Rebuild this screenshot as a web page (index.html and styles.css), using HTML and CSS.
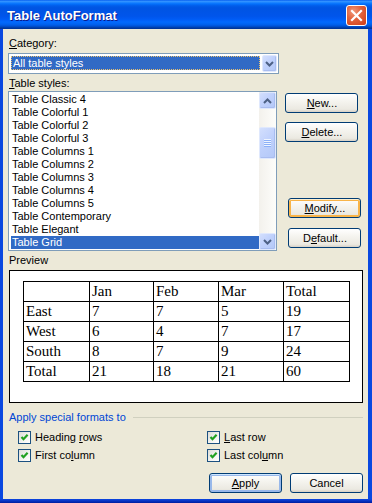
FILE: index.html
```
<!DOCTYPE html>
<html>
<head>
<meta charset="utf-8">
<title>Table AutoFormat</title>
<link rel="stylesheet" href="styles.css">
</head>
<body>
<div class="window">
  <div class="titlebar">
    <span class="title">Table AutoFormat</span>
    <span class="close">
      <svg width="19" height="19" viewBox="0 0 19 19"><path d="M5 5 L14 14 M14 5 L5 14" stroke="#fff" stroke-width="2.2" stroke-linecap="square" fill="none"/></svg>
    </span>
  </div>
  <div class="client">
    <div class="lbl lbl-cat"><u>C</u>ategory:</div>
    <div class="combo">
      <div class="combo-val"><span>All table styles</span></div>
      <div class="xpbtn combo-btn">
        <svg width="9" height="6" viewBox="0 0 9 6"><path d="M1 1 L4.5 4.5 L8 1" stroke="#4d6185" stroke-width="2" fill="none"/></svg>
      </div>
    </div>
    <div class="lbl lbl-styles"><u>T</u>able styles:</div>
    <div class="styles-row">
      <div class="listbox">
        <ul class="items">
          <li>Table Classic 4</li>
          <li>Table Colorful 1</li>
          <li>Table Colorful 2</li>
          <li>Table Colorful 3</li>
          <li>Table Columns 1</li>
          <li>Table Columns 2</li>
          <li>Table Columns 3</li>
          <li>Table Columns 4</li>
          <li>Table Columns 5</li>
          <li>Table Contemporary</li>
          <li>Table Elegant</li>
          <li class="sel">Table Grid</li>
        </ul>
        <div class="vscroll">
          <div class="xpbtn sb-btn">
            <svg width="9" height="6" viewBox="0 0 9 6"><path d="M1 5 L4.5 1.5 L8 5" stroke="#4d6185" stroke-width="2" fill="none"/></svg>
          </div>
          <div class="track">
            <div class="xpbtn thumb"><span class="grip"></span></div>
          </div>
          <div class="xpbtn sb-btn">
            <svg width="9" height="6" viewBox="0 0 9 6"><path d="M1 1 L4.5 4.5 L8 1" stroke="#4d6185" stroke-width="2" fill="none"/></svg>
          </div>
        </div>
      </div>
      <div class="side">
        <div class="btn btn-new"><u>N</u>ew...</div>
        <div class="btn btn-delete"><u>D</u>elete...</div>
        <div class="btn btn-modify btn-hot"><u>M</u>odify...</div>
        <div class="btn btn-default">D<u>e</u>fault...</div>
      </div>
    </div>
    <div class="lbl lbl-preview">Preview</div>
    <div class="preview">
      <table class="ptable">
        <colgroup><col class="c1"><col class="c2"><col class="c3"><col class="c4"><col class="c5"></colgroup>
        <tr><td></td><td>Jan</td><td>Feb</td><td>Mar</td><td>Total</td></tr>
        <tr><td>East</td><td>7</td><td>7</td><td>5</td><td>19</td></tr>
        <tr><td>West</td><td>6</td><td>4</td><td>7</td><td>17</td></tr>
        <tr><td>South</td><td>8</td><td>7</td><td>9</td><td>24</td></tr>
        <tr><td>Total</td><td>21</td><td>18</td><td>21</td><td>60</td></tr>
      </table>
    </div>
    <div class="group-title"><span>Apply special formats to</span><i class="rule"></i></div>
    <div class="checks">
      <div class="chk"><span class="box"><svg width="11" height="11" viewBox="0 0 11 11"><path d="M2.5 5 L4.5 7.2 L8.6 2.8" stroke="#21a121" stroke-width="2.2" fill="none"/></svg></span><span>Heading <u>r</u>ows</span></div>
      <div class="chk"><span class="box"><svg width="11" height="11" viewBox="0 0 11 11"><path d="M2.5 5 L4.5 7.2 L8.6 2.8" stroke="#21a121" stroke-width="2.2" fill="none"/></svg></span><span><u>L</u>ast row</span></div>
      <div class="chk"><span class="box"><svg width="11" height="11" viewBox="0 0 11 11"><path d="M2.5 5 L4.5 7.2 L8.6 2.8" stroke="#21a121" stroke-width="2.2" fill="none"/></svg></span><span>First co<u>l</u>umn</span></div>
      <div class="chk"><span class="box"><svg width="11" height="11" viewBox="0 0 11 11"><path d="M2.5 5 L4.5 7.2 L8.6 2.8" stroke="#21a121" stroke-width="2.2" fill="none"/></svg></span><span>Last col<u>u</u>mn</span></div>
    </div>
    <div class="footer">
      <div class="btn btn-default-action"><u>A</u>pply</div>
      <div class="btn">Cancel</div>
    </div>
  </div>
</div>
</body>
</html>
```
FILE: styles.css
```
* { box-sizing: border-box; }
html, body { margin: 0; padding: 0; }
body {
  width: 372px;
  height: 503px;
  overflow: hidden;
  background: #fff;
  font-family: "Liberation Sans", Arial, sans-serif;
  font-size: 11px;
  color: #000;
}
u { text-decoration: underline; text-underline-offset: 1px; }

.window {
  width: 372px;
  height: 503px;
  display: flex;
  flex-direction: column;
  background: linear-gradient(to bottom, #0a48e0 0, #0a48e0 499px, #0b3dd3 500px, #001c9e 503px);
}

.titlebar {
  height: 29px;
  flex: none;
  display: flex;
  align-items: flex-start;
  padding: 0 5px 0 7px;
  background: linear-gradient(to bottom,
    #0058ee 0%, #3593ff 4%, #288eff 7%, #127dff 10%, #036ffc 14%,
    #0262ee 18%, #0057e5 24%, #0054e3 30%, #0055eb 56%, #005bf5 66%,
    #026afe 76%, #0062ef 84%, #0052d6 90%, #0040ab 95%, #003092 100%);
}
.title {
  flex: 1;
  margin-top: 8px;
  font-weight: bold;
  font-size: 13px;
  line-height: 16px;
  color: #fff;
  text-shadow: 1px 1px 0 #0a1a8c;
}
.close {
  margin-top: 5px;
  width: 21px;
  height: 21px;
  border: 1px solid #fff;
  border-radius: 3px;
  background: radial-gradient(circle at 35% 30%, #f19a7c 0, #e3653f 40%, #cf3b14 100%);
  display: flex;
  align-items: center;
  justify-content: center;
}

.client {
  flex: 1;
  margin: 0 4px 4px 3px;
  background: #ece9d8;
  padding: 0 5px;
  display: flex;
  flex-direction: column;
}

.lbl {
  height: 13px;
  line-height: 13px;
  padding-left: 1px;
  white-space: nowrap;
}
.lbl-cat { margin-top: 8px; }
.lbl-styles { margin-top: 3px; }
.lbl-preview { margin-top: 3px; }

/* combobox */
.combo {
  margin-top: 3px;
  width: 271px;
  height: 21px;
  border: 1px solid #7f9db9;
  background: #fff;
  display: flex;
  padding: 1px 1px 1px 2px;
}
.combo-val {
  flex: 1;
  margin: 1px 2px 2px 0;
  background: #316ac5;
  color: #fff;
  outline: 1px dotted #e8c070;
  outline-offset: -1px;
  line-height: 15px;
  padding-left: 2px;
}
.combo-btn {
  width: 15px;
}

/* XP blue scroll/drop buttons */
.xpbtn {
  border: 1px solid #dfe8fd;
  border-radius: 2px;
  background: linear-gradient(135deg, #d3dffd 0%, #c0d1fc 45%, #b3c8f7 100%);
  box-shadow: inset -1px -1px 0 #a9bdf0;
  display: flex;
  align-items: center;
  justify-content: center;
}

/* list */
.styles-row {
  margin-top: 1px;
  display: flex;
  gap: 8px;
}
.listbox {
  width: 271px;
  height: 160px;
  border: 1px solid #7f9db9;
  background: #fff;
  display: flex;
}
.items {
  flex: 1;
  list-style: none;
  margin: 0;
  padding: 1px 0 0 2px;
}
.items li {
  height: 13px;
  line-height: 13px;
  padding-left: 1px;
  white-space: nowrap;
}
.items li.sel {
  background: #316ac5;
  color: #fff;
}
.vscroll {
  width: 17px;
  display: flex;
  flex-direction: column;
  background: linear-gradient(to right, #f3f1ec, #fdfdfa);
}
.sb-btn { height: 17px; flex: none; }
.track {
  flex: 1;
  padding-top: 18px;
}
.thumb {
  height: 32px;
}
.grip {
  width: 7px;
  height: 8px;
  background: repeating-linear-gradient(to bottom, #eef4fe 0, #eef4fe 1px, #8cb0f8 1px, #8cb0f8 2px);
}

/* side buttons */
.side {
  display: flex;
  flex-direction: column;
  align-items: flex-start;
  width: 78px;
}
.btn {
  width: 73px;
  height: 20px;
  border: 1px solid #003c74;
  border-radius: 3px;
  background: linear-gradient(to bottom, #ffffff 0%, #f5f4ef 40%, #ebe9e1 85%, #d6d0c5 100%);
  text-align: center;
  line-height: 18px;
  white-space: nowrap;
}
.btn-new { margin-top: 2px; }
.btn-delete { margin-top: 9px; }
.btn-modify { margin-top: 56px; margin-left: 3px; }
.btn-default { margin-top: 10px; margin-left: 3px; }
.btn-hot {
  box-shadow: inset 0 1px 0 #fff0cf, inset 0 0 0 2px #f8b449;
}
.btn-default-action {
  box-shadow: inset 0 1px 0 #cee7ff, inset 0 0 0 2px #98b8ea;
}

/* preview */
.preview {
  margin-top: 3px;
  margin-left: 1px;
  width: 354px;
  height: 133px;
  border: 1px solid #000;
  background: #fff;
  padding: 10px 0 0 13px;
}
.ptable {
  border-collapse: collapse;
  table-layout: fixed;
  width: 327px;
  font-family: "Liberation Serif", "Times New Roman", serif;
  font-size: 15px;
}
.ptable col.c1 { width: 66px; }
.ptable col.c2 { width: 64px; }
.ptable col.c3 { width: 65px; }
.ptable col.c4 { width: 65px; }
.ptable col.c5 { width: 66px; }
.ptable tr { height: 20px; }
.ptable td {
  border: 1px solid #000;
  padding: 0 1px 0 2px;
  line-height: 17px;
  white-space: nowrap;
}

/* group */
.group-title {
  margin-top: 8px;
  height: 13px;
  line-height: 13px;
  display: flex;
  align-items: center;
  color: #0046d5;
  padding-left: 1px;
}
.group-title .rule {
  flex: 1;
  height: 1px;
  background: #d0d0bf;
  margin-left: 7px;
}
.checks {
  margin-top: 7px;
  padding-left: 10px;
  display: grid;
  grid-template-columns: 189px 1fr;
  row-gap: 5px;
}
.chk {
  height: 13px;
  display: flex;
  align-items: center;
  gap: 4px;
  white-space: nowrap;
  line-height: 13px;
}
.chk .box {
  width: 13px;
  height: 13px;
  border: 1px solid #1c5180;
  background: linear-gradient(135deg, #dcdcd7 0%, #f4f4f1 60%, #fff 100%);
  display: flex;
}

.footer {
  margin-top: 11px;
  display: flex;
  justify-content: flex-end;
  gap: 8px;
}
```
